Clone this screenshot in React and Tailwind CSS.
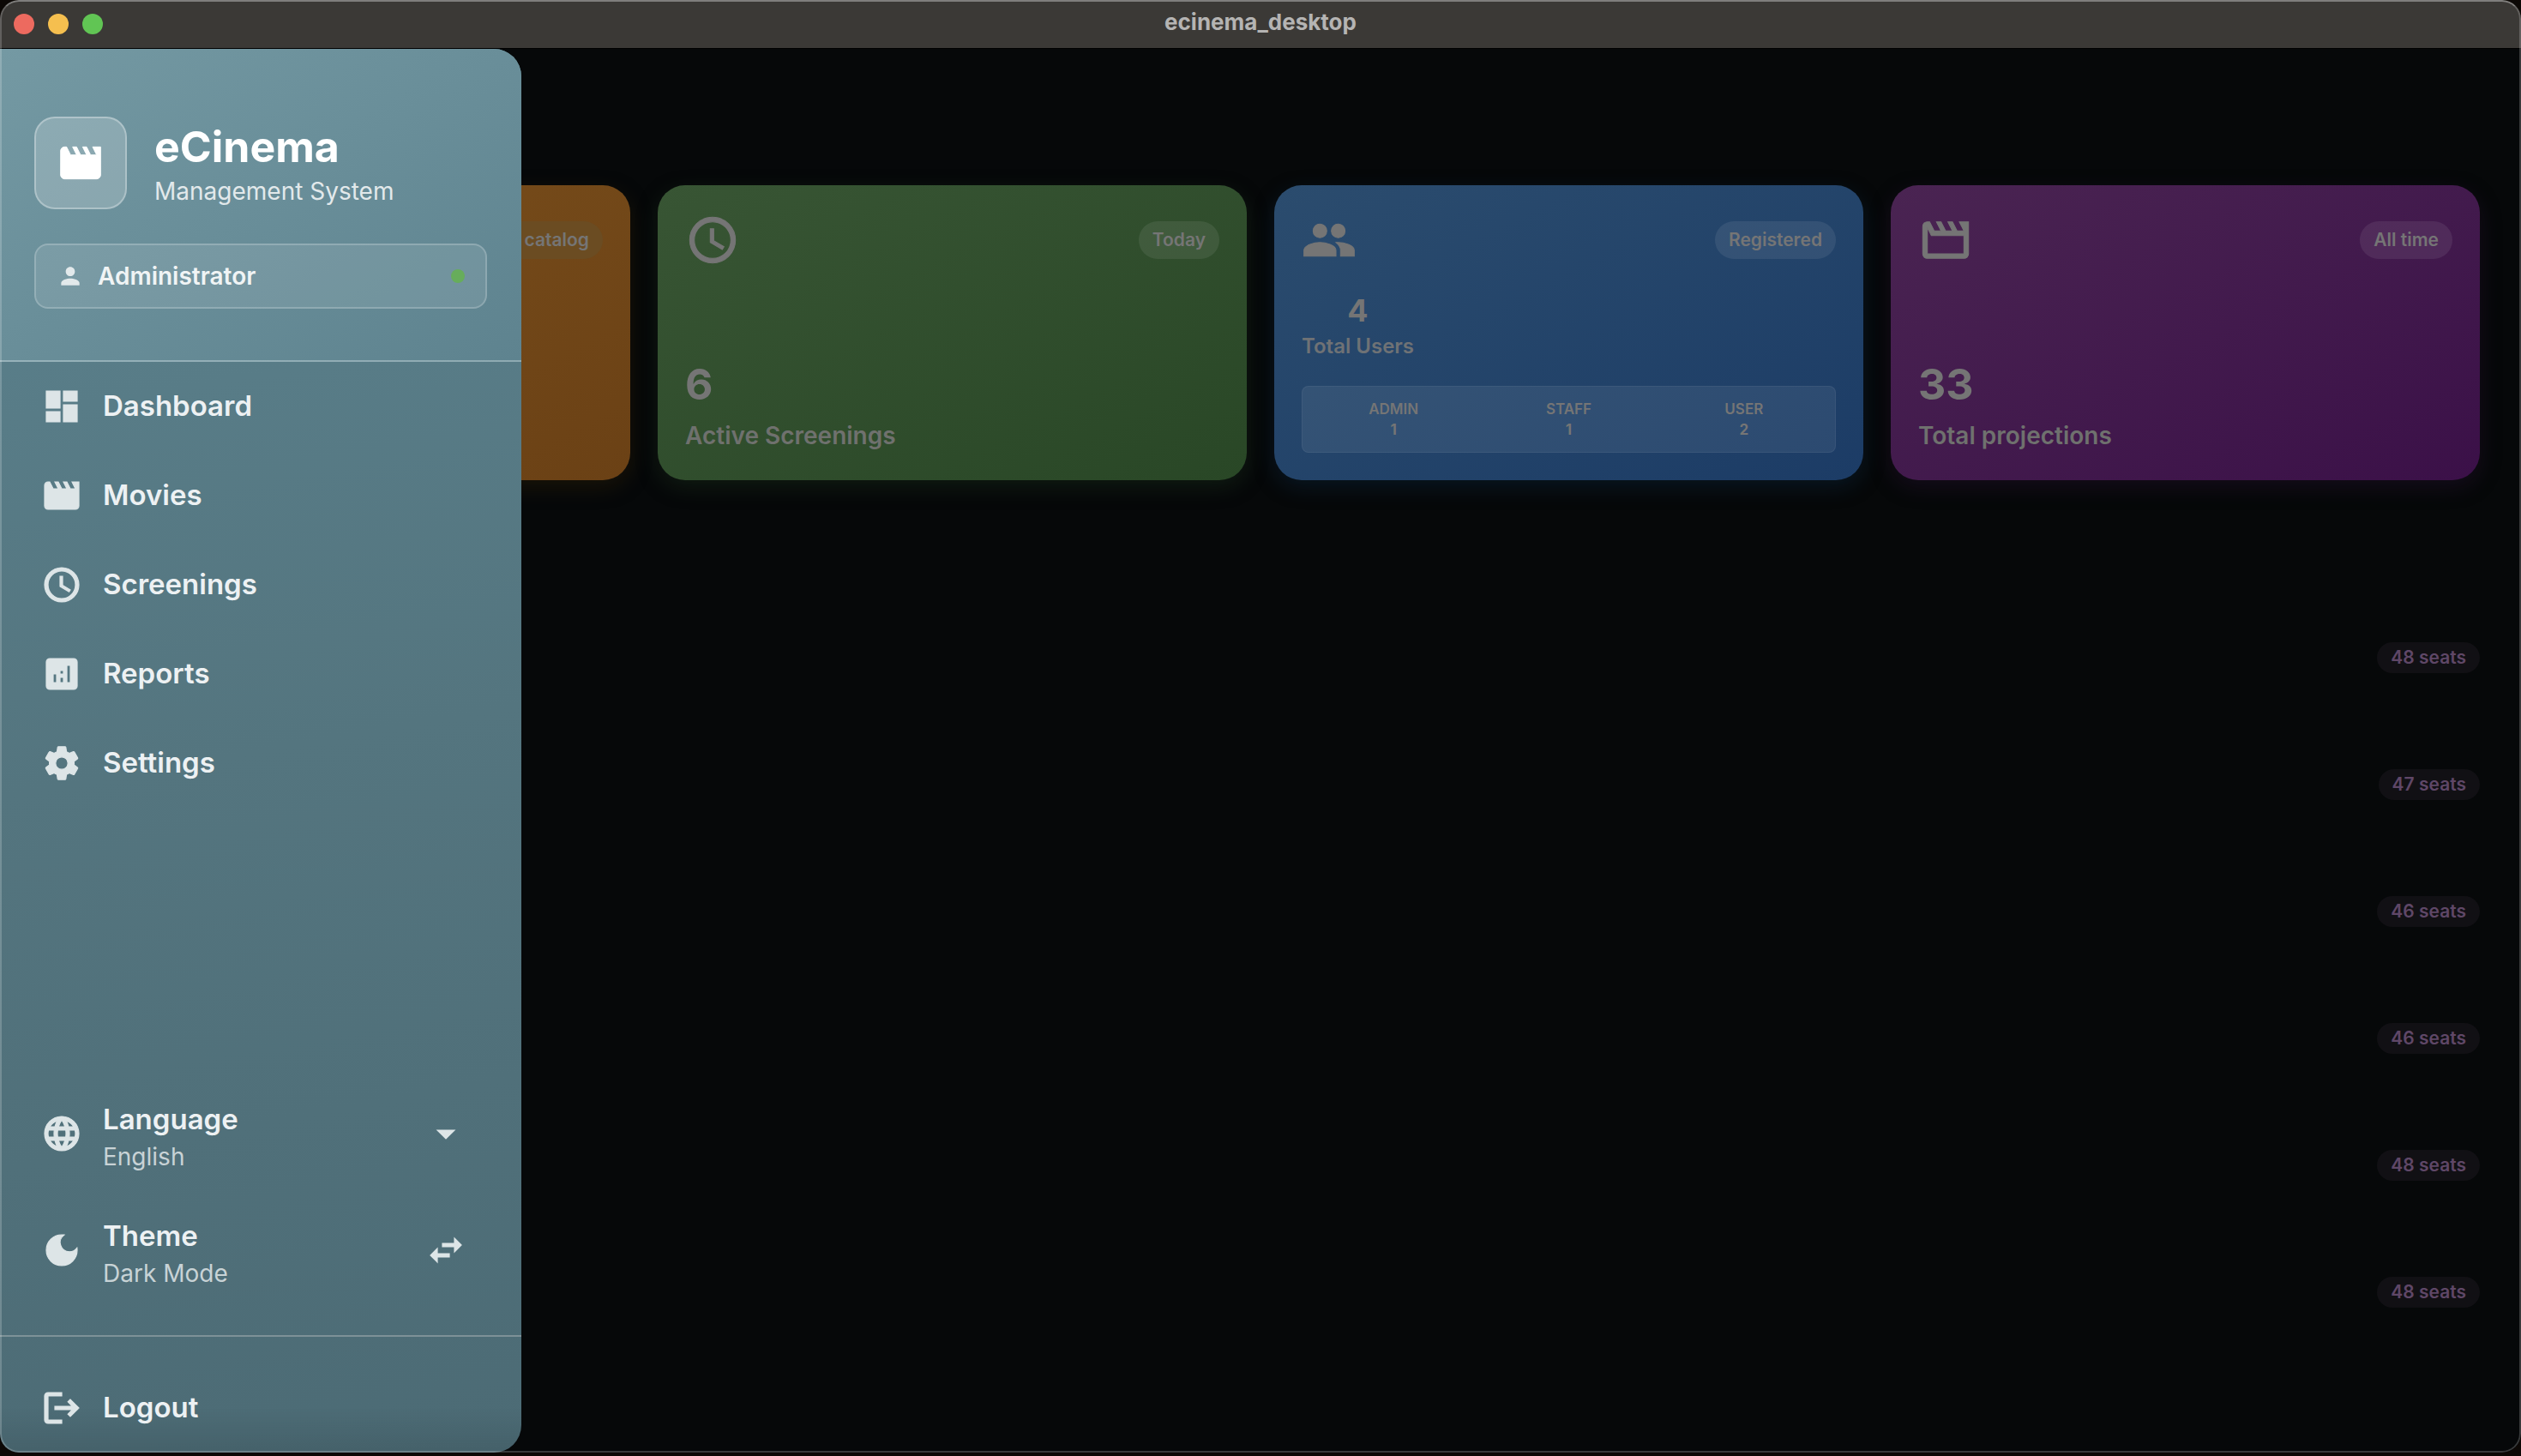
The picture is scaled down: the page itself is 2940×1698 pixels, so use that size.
import React from "react";
import {
  MdAccessTime,
  MdAnalytics,
  MdArrowDropDown,
  MdDarkMode,
  MdDashboard,
  MdLanguage,
  MdLogout,
  MdMovie,
  MdOutlineMovie,
  MdPeople,
  MdPerson,
  MdSettings,
  MdSwapHoriz,
} from "react-icons/md";

const navItems = [
  { label: "Dashboard", Icon: MdDashboard },
  { label: "Movies", Icon: MdMovie },
  { label: "Screenings", Icon: MdAccessTime },
  { label: "Reports", Icon: MdAnalytics },
  { label: "Settings", Icon: MdSettings },
];

const roles = [
  { label: "ADMIN", count: 1 },
  { label: "STAFF", count: 1 },
  { label: "USER", count: 2 },
];

const seats = [48, 47, 46, 46, 48, 48];

const navIcon = "size-12 shrink-0 text-[#dde5e7] [&_path:not([fill='none'])]:[stroke-width:0.6]";
const cardIcon = "size-16 [&_path:not([fill='none'])]:[stroke-width:0.4]";

function TitleBar() {
  return (
    <header className="grid h-[57px] shrink-0 grid-cols-3 items-center border-b border-black bg-[#3b3936] px-4">
      <div className="flex gap-4">
        <button aria-label="Close" className="size-6 rounded-full bg-[#ed6a5f]" />
        <button aria-label="Minimize" className="size-6 rounded-full bg-[#f5bf4f]" />
        <button aria-label="Zoom" className="size-6 rounded-full bg-[#61c554]" />
      </div>
      <h1 className="pb-1 text-center text-[26px] leading-8 font-bold text-[#b5b4b3]">ecinema_desktop</h1>
    </header>
  );
}

function Badge({ children, className = "bg-white/8" }) {
  return (
    <span className={"flex h-11 items-center rounded-full px-4 text-[21px] font-semibold " + className}>
      {children}
    </span>
  );
}

function Card({ className, icon, badge, badgeClass, children }) {
  return (
    <section className={"flex h-[344px] flex-col justify-between rounded-[32px] bg-linear-to-br p-8 text-[#757575] " + className}>
      <div className="flex h-16 items-center justify-between">
        <div>{icon}</div>
        <Badge className={badgeClass}>{badge}</Badge>
      </div>
      {children}
    </section>
  );
}

function Stat({ value, label }) {
  return (
    <div>
      <p className="mb-2 text-[50px] leading-16 font-bold">{value}</p>
      <p className="text-[28px] leading-10 font-semibold text-[#6f716e]">{label}</p>
    </div>
  );
}

function Main() {
  return (
    <main className="h-full bg-[#060809] px-12 pt-[159px]">
      <div className="grid grid-cols-4 gap-8">
        <Card
          badge="catalog"
          badgeClass="pl-12 bg-[#6b4c22]"
          className="from-[#7a4f1c] to-[#6b4115] shadow-[0_8px_24px_rgba(60,40,5,0.35)]"
        />
        <Card
          icon={<MdAccessTime className={cardIcon} />}
          badge="Today"
          className="from-[#385534] to-[#294726] shadow-[0_8px_24px_rgba(35,60,35,0.35)]"
        >
          <Stat value="6" label="Active Screenings" />
        </Card>
        <Card
          icon={<MdPeople className={cardIcon} />}
          badge="Registered"
          className="from-[#2b4c6e] to-[#1c3c66] shadow-[0_8px_24px_rgba(15,50,80,0.35)]"
        >
          <div>
            <div className="mb-[30px] w-fit text-center">
              <p className="mb-1 text-[36px] leading-11 font-bold">4</p>
              <p className="text-[24px] leading-8 font-semibold text-[#6f7275]">Total Users</p>
            </div>
            <dl className="grid h-[78px] grid-cols-3 items-center rounded-lg border border-white/5 bg-white/7 px-1 text-center text-[17px] leading-6">
              {roles.map((r) => (
                <div key={r.label}>
                  <dt className="font-semibold">{r.label}</dt>
                  <dd className="font-bold">{r.count}</dd>
                </div>
              ))}
            </dl>
          </div>
        </Card>
        <Card
          icon={<MdOutlineMovie className={cardIcon} />}
          badge="All time"
          className="from-[#4a2452] to-[#3b1048] shadow-[0_8px_24px_rgba(50,20,60,0.35)]"
        >
          <Stat value="33" label="Total projections" />
        </Card>
      </div>
      <ul className="mt-[133px]">
        {seats.map((n, i) => (
          <li key={i} className="flex h-[148px] items-center justify-end">
            <span className="flex h-9 items-center rounded-full bg-[#111014] px-4 text-[21px] font-semibold text-[#5f4767]">
              {n} seats
            </span>
          </li>
        ))}
      </ul>
    </main>
  );
}

function SettingRow({ Icon, title, value, Action }) {
  return (
    <button className="flex h-[136px] w-full items-center pr-16 pl-12 text-left">
      <Icon className={navIcon} />
      <span className="ml-6 flex-1 pt-1.5">
        <span className="block text-[33px] leading-12 font-semibold text-[#edf1f3]">{title}</span>
        <span className="block text-[28px] leading-10 text-[#c8d3d6]">{value}</span>
      </span>
      <Action className={navIcon} />
    </button>
  );
}

function Drawer() {
  return (
    <aside className="absolute inset-y-0 left-0 flex w-[608px] flex-col overflow-hidden rounded-r-[32px] bg-linear-170 from-[#5c838f] via-[#54757f] to-[#4c6b75]">
      <div className="border-b-2 border-white/25 bg-linear-to-br from-[#7499a3] to-[#5e838f] px-10 pt-[79px] pb-[60px]">
        <div className="flex items-center gap-8">
          <div className="flex size-[108px] items-center justify-center rounded-3xl border-2 border-white/30 bg-white/20 text-white">
            <MdMovie className="size-14 [&_path:not([fill='none'])]:[stroke-width:0.4]" />
          </div>
          <div className="pt-1">
            <p className="text-[50px] leading-[62px] font-bold text-white">eCinema</p>
            <p className="text-[28px] leading-[42px] text-[#e2e9eb]">Management System</p>
          </div>
        </div>
        <div className="mt-10 flex h-[76px] items-center rounded-2xl border-2 border-white/20 bg-white/10 px-6">
          <MdPerson size={32} className="text-[#e2e9eb]" />
          <span className="ml-4 flex-1 text-[28px] font-semibold text-[#f0f4f5]">Administrator</span>
          <span className="size-4 rounded-full bg-[#67ad5b]" />
        </div>
      </div>
      <nav className="flex-1">
        {navItems.map(({ label, Icon }) => (
          <a key={label} href="#" className="flex h-[104px] items-center gap-6 pl-12 text-[33px] font-semibold text-[#edf1f3]">
            <Icon className={navIcon} />
            {label}
          </a>
        ))}
      </nav>
      <SettingRow Icon={MdLanguage} title="Language" value="English" Action={MdArrowDropDown} />
      <SettingRow Icon={MdDarkMode} title="Theme" value="Dark Mode" Action={MdSwapHoriz} />
      <div className="mt-[31px] border-t-2 border-white/30 bg-linear-to-b from-transparent from-60% to-black/10 pt-[31px]">
        <button className="flex h-[104px] w-full items-center gap-6 pl-12 text-[33px] font-semibold text-[#edf1f3]">
          <MdLogout className={navIcon} />
          Logout
        </button>
      </div>
    </aside>
  );
}

export default function App() {
  return (
    <div className="h-screen bg-[#0c0805] pb-1 font-['Inter',sans-serif]">
      <div className="relative flex h-full flex-col overflow-hidden rounded-[22px]">
        <TitleBar />
        <div className="relative min-h-0 flex-1">
          <Main />
          <Drawer />
        </div>
        <div className="pointer-events-none absolute inset-0 rounded-[22px] border-2 border-white/20 border-t-white/35" />
      </div>
    </div>
  );
}
